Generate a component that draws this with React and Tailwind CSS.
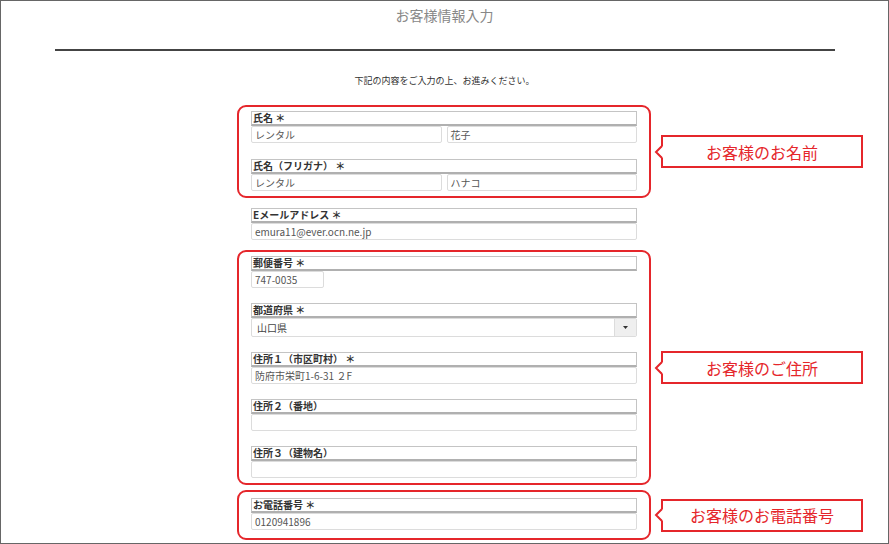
const RED = "border-[#e5262b]";

function Label({ children }) {
  return (
    <div className="h-[15px] border border-[#c4c4c4] border-b-2 border-b-[#b0b0b0] bg-white text-[10px] font-bold leading-[11px] text-[#333] pl-px whitespace-nowrap">
      {children}
    </div>
  );
}

function Input({ value, className = "" }) {
  return (
    <div
      className={`h-[17px] border border-[#dcdcdc] rounded-[2px] bg-white px-[3px] text-[10px] leading-[15px] text-[#555] whitespace-nowrap ${className}`}
    >
      {value}
    </div>
  );
}

function Select({ value }) {
  return (
    <div className="h-[19px] flex border border-[#dcdcdc] rounded-[2px] bg-white text-[10px] text-[#444]">
      <div className="flex-1 px-[5px] leading-[17px]">{value}</div>
      <div className="w-[22px] flex items-center justify-center bg-[#efefef] border-l border-[#dcdcdc]">
        <svg width="5" height="3" viewBox="0 0 5 3">
          <polygon points="0,0 5,0 2.5,3" fill="#333" />
        </svg>
      </div>
    </div>
  );
}

function Callout({ children, className = "" }) {
  return (
    <div
      className={`relative ml-[10px] w-[202px] h-[33px] border-2 ${RED} bg-white flex items-center justify-center text-[16px] text-[#e5262b] ${className}`}
    >
      <svg
        className="absolute left-[-10px] top-1/2 -translate-y-1/2"
        width="12"
        height="14"
        viewBox="0 0 12 14"
      >
        <polygon points="11,0 3,7 11,14" fill="white" />
        <polyline points="9,1 3,7 9,13" fill="none" stroke="#e5262b" strokeWidth="2" />
      </svg>
      <span className="leading-none">{children}</span>
    </div>
  );
}

export default function App() {
  return (
    <div
      className="w-[889px] h-[544px] border border-[#666] bg-white overflow-hidden"
      style={{ fontFamily: '"Noto Sans CJK JP", "Noto Sans", sans-serif' }}
    >
      <h1 className="pt-[4px] text-center text-[14px] leading-[20px] text-[#888]">お客様情報入力</h1>
      <div className="ml-[54px] mr-[53px] mt-[24px] h-[2px] bg-[#444]"></div>
      <p className="mt-[24px] text-center text-[9px] leading-[12px] text-[#333]">
        下記の内容をご入力の上、お進みください。
      </p>

      <div className="mt-[18px] flex flex-col">
        {/* 氏名 */}
        <div className="flex items-center">
          <div className={`ml-[236px] w-[414px] border-2 ${RED} rounded-[9px] px-3 pt-1 pb-[5px] flex flex-col gap-[16px]`}>
            <div>
              <Label>氏名 ＊</Label>
              <div className="flex gap-[5px]">
                <Input value="レンタル" className="flex-1" />
                <Input value="花子" className="flex-1" />
              </div>
            </div>
            <div>
              <Label>氏名（フリガナ） ＊</Label>
              <div className="flex gap-[5px]">
                <Input value="レンタル" className="flex-1" />
                <Input value="ハナコ" className="flex-1" />
              </div>
            </div>
          </div>
          <Callout>お客様のお名前</Callout>
        </div>

        {/* メール */}
        <div className="mt-[4px] ml-[236px] w-[414px] border-2 border-transparent px-3 pt-1 pb-1">
          <Label>Eメールアドレス ＊</Label>
          <Input value="emura11@ever.ocn.ne.jp" />
        </div>

        {/* 住所 */}
        <div className="mt-[4px] flex items-center">
          <div className={`ml-[236px] w-[414px] border-2 ${RED} rounded-[9px] px-3 pt-1 pb-[5px] flex flex-col gap-[15px]`}>
            <div>
              <Label>郵便番号 ＊</Label>
              <Input value="747-0035" className="w-[73px]" />
            </div>
            <div>
              <Label>都道府県 ＊</Label>
              <Select value="山口県" />
            </div>
            <div>
              <Label>住所１（市区町村） ＊</Label>
              <Input value="防府市栄町1-6-31 ２F" />
            </div>
            <div>
              <Label>住所２（番地）</Label>
              <Input value="" />
            </div>
            <div>
              <Label>住所３（建物名）</Label>
              <Input value="" />
            </div>
          </div>
          <Callout>お客様のご住所</Callout>
        </div>

        {/* 電話 */}
        <div className="mt-[5px] flex items-center">
          <div className={`ml-[236px] w-[414px] border-2 ${RED} rounded-[9px] px-3 pt-[6px] pb-[8px]`}>
            <Label>お電話番号 ＊</Label>
            <Input value="0120941896" />
          </div>
          <Callout>お客様のお電話番号</Callout>
        </div>
      </div>
    </div>
  );
}
